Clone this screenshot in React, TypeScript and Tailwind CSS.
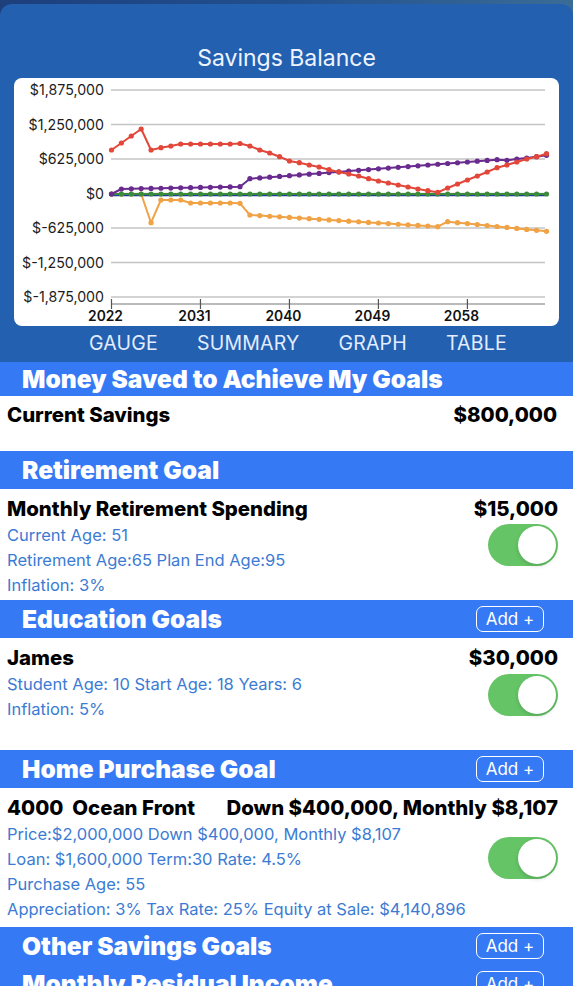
import React from "react";

const N = 45;
const X0 = 97.5;
const DX = 9.886;
const xs = (i: number) => X0 + i * DX;

function lin(a: number, b: number, n: number): number[] {
  const out: number[] = [];
  for (let k = 0; k < n; k++) out.push(a + ((b - a) * k) / (n - 1));
  return out;
}

const redPage = [
  150, 143, 136, 129, 150, 147.7, 146, 144, 144, 144, 144, 144, 144, 143.5, 146, 150, 153, 156.7, 161, 162.7, 165, 167,
  169.7, 172, 174, 176, 178.7, 181, 183, 185, 187, 189, 190.7, 192.3, 188, 184, 180, 176, 172, 167.7, 165, 162, 159,
  156.7, 153.7,
];
const purplePage = [194, ...lin(189, 186.7, 13), ...lin(178.7, 159.7, 26), 160.3, 159, 158, 156.7, 155.3];
const greenPage = Array.from({ length: N }, () => 194);
const orangePage = [194, 194, 194, 194, 222.7, 200, 200, 200, 203, 203, 203, 203, 203, 203.3, ...lin(215, 226.7, 20), ...lin(221.7, 231.3, 11)];

const toCard = (arr: number[]) => arr.map((y) => y - 78);

function Series({ data, color }: { data: number[]; color: string }) {
  const ys = toCard(data);
  const pts = ys.map((y, i) => `${xs(i).toFixed(1)},${y.toFixed(1)}`).join(" ");
  return (
    <g>
      <polyline points={pts} fill="none" stroke={color} strokeWidth={2} strokeLinejoin="round" />
      {ys.map((y, i) => (
        <circle key={i} cx={xs(i)} cy={y} r={2.6} fill={color} />
      ))}
    </g>
  );
}

function Chart() {
  const grid = [12, 46.5, 81, 115.5, 150, 184.5, 219];
  const labels = ["$1,875,000", "$1,250,000", "$625,000", "$0", "$-625,000", "$-1,250,000", "$-1,875,000"];
  const years = ["2022", "2031", "2040", "2049", "2058"];
  return (
    <svg width="545" height="248" viewBox="0 0 545 248" className="block">
      {grid.map((y, i) => (
        <line key={i} x1={97} x2={531} y1={y} y2={y} stroke="#c4c4c4" strokeWidth={1.3} />
      ))}
      {labels.map((t, i) => (
        <text
          key={t}
          x={90}
          y={grid[i] + 5}
          textAnchor="end"
          fontSize="14.2"
          fill="#1c1c1c"
          fontFamily="Inter, 'Noto Sans', sans-serif"
        >
          {t}
        </text>
      ))}
      <line x1={97} x2={531} y1={226} y2={226} stroke="#777" strokeWidth={1.2} />
      {years.map((y, k) => {
        const x = xs(k * 9);
        return (
          <g key={y}>
            <line x1={x} x2={x} y1={221} y2={231} stroke="#555" strokeWidth={1.2} />
            <text
              x={x - 6}
              y={243}
              textAnchor="middle"
              fontSize="13.8"
              fontWeight={600}
              fill="#111"
              fontFamily="Inter, 'Noto Sans', sans-serif"
            >
              {y}
            </text>
          </g>
        );
      })}
      <line x1={97} x2={531} y1={117} y2={117} stroke="#1f3f96" strokeWidth={2.5} />
      <Series data={orangePage} color="#f0a245" />
      <Series data={greenPage} color="#3b8b3b" />
      <Series data={purplePage} color="#6a2b8f" />
      <Series data={redPage} color="#e2473a" />
    </svg>
  );
}

function Toggle({ mt }: { mt: string }) {
  return (
    <div className={`w-[70px] h-[42px] rounded-full bg-[#65c466] flex items-center justify-end p-[2px] ${mt}`}>
      <div className="w-[38px] h-[38px] rounded-full bg-white shadow-[0_2px_4px_rgba(0,0,0,0.15)]" />
    </div>
  );
}

function Header({ title, add, h = "h-[38px]" }: { title: string; add?: boolean; h?: string }) {
  return (
    <div className={`${h} bg-[#3579f5] flex items-center justify-between pl-[22px] pr-[29px] shrink-0`}>
      <span className="text-white font-black text-[24.5px] leading-none tracking-[0px] whitespace-nowrap">{title}</span>
      {add && (
        <span className="h-[26px] w-[68px] border-[1.5px] border-white rounded-[7px] text-white text-[17px] flex items-center justify-center leading-none">
          Add +
        </span>
      )}
    </div>
  );
}

function Detail({ children }: { children: React.ReactNode }) {
  return <div className="text-[16.5px] leading-[25px] text-[#3c7bd3] whitespace-nowrap">{children}</div>;
}

function TitleRow({ left, right }: { left: string; right: string }) {
  return (
    <div className="flex justify-between items-center h-[28px] text-[20.4px] font-extrabold text-black whitespace-pre">
      <span>{left}</span>
      <span>{right}</span>
    </div>
  );
}

export default function App() {
  return (
    <div className="w-[573px] h-[1000px] overflow-hidden bg-white font-['Inter','Noto_Sans',sans-serif]">
      <div className="bg-gradient-to-r from-[#1d3f7c] via-[#22508f] to-[#3b6c96] pt-[4px]">
        <div className="rounded-t-[12px] bg-[#2360b0] pt-[40px] h-[358px] flex flex-col">
          <div className="h-[28px] leading-[28px] text-center text-[23px] text-[#eef4ff]">Savings Balance</div>
          <div className="mt-[6px] mx-[14px] h-[248px] bg-white rounded-[8px] overflow-hidden">
            <Chart />
          </div>
          <div className="h-[36px] flex items-center pl-[89px] gap-[39px] text-[19.5px] text-[#e3edff] tracking-[0.2px]">
            <span>GAUGE</span>
            <span>SUMMARY</span>
            <span>GRAPH</span>
            <span>TABLE</span>
          </div>
        </div>
      </div>

      <Header title="Money Saved to Achieve My Goals" h="h-[34px]" />
      <div className="h-[55px] pl-[7px] pr-[16px] pt-[5px]">
        <TitleRow left="Current Savings" right="$800,000" />
      </div>

      <Header title="Retirement Goal" />
      <div className="h-[111px] pl-[7px] pr-[15px] pt-[6px]">
        <TitleRow left="Monthly Retirement Spending" right="$15,000" />
        <div className="flex justify-between">
          <div>
            <Detail>Current Age: 51</Detail>
            <Detail>Retirement Age:65 Plan End Age:95</Detail>
            <Detail>Inflation: 3%</Detail>
          </div>
          <Toggle mt="mt-[1px]" />
        </div>
      </div>

      <Header title="Education Goals" add />
      <div className="h-[112px] pl-[7px] pr-[15px] pt-[6px]">
        <TitleRow left="James" right="$30,000" />
        <div className="flex justify-between">
          <div>
            <Detail>Student Age: 10 Start Age: 18 Years: 6</Detail>
            <Detail>Inflation: 5%</Detail>
          </div>
          <Toggle mt="mt-[2px]" />
        </div>
      </div>

      <Header title="Home Purchase Goal" add />
      <div className="h-[139px] pl-[7px] pr-[15px] pt-[6px]">
        <TitleRow left="4000  Ocean Front" right="Down $400,000, Monthly $8,107" />
        <div className="flex justify-between">
          <div>
            <Detail>Price:$2,000,000 Down $400,000, Monthly $8,107</Detail>
            <Detail>Loan: $1,600,000 Term:30 Rate: 4.5%</Detail>
            <Detail>Purchase Age: 55</Detail>
            <Detail>Appreciation: 3% Tax Rate: 25% Equity at Sale: $4,140,896</Detail>
          </div>
          <Toggle mt="mt-[15px]" />
        </div>
      </div>

      <Header title="Other Savings Goals" add />
      <div className="h-[21px] overflow-hidden">
        <Header title="Monthly Residual Income" add />
      </div>
    </div>
  );
}
